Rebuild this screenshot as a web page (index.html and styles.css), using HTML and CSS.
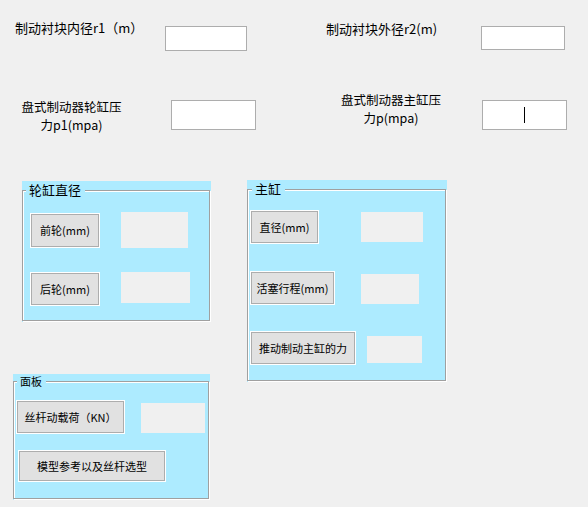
FILE: index.html
```html
<!DOCTYPE html>
<html lang="zh">
<head>
<meta charset="utf-8">
<title>制动器计算</title>
<link rel="stylesheet" href="styles.css">
</head>
<body>
<div class="row row-one">
  <div class="label label-r1">制动衬块内径r1（m）</div>
  <div class="edit edit-r1"></div>
  <div class="label label-r2">制动衬块外径r2(m)</div>
  <div class="edit edit-r2"></div>
</div>
<div class="row row-two">
  <div class="label label-p1">盘式制动器轮缸压<br>力p1(mpa)</div>
  <div class="edit edit-p1"></div>
  <div class="label label-p">盘式制动器主缸压<br>力p(mpa)</div>
  <div class="edit edit-p"><span class="caret"></span></div>
</div>
<div class="bottom">
  <div class="left-col">
    <section class="panel panel-wheel">
      <div class="frame frame-wheel">
        <span class="title">轮缸直径</span>
        <div class="prow wheel-r1">
          <button class="btn btn-front">前轮(mm)</button>
          <div class="out out-front"></div>
        </div>
        <div class="prow wheel-r2">
          <button class="btn btn-rear">后轮(mm)</button>
          <div class="out out-rear"></div>
        </div>
      </div>
    </section>
    <section class="panel panel-board">
      <div class="frame frame-board">
        <span class="title title-small">面板</span>
        <div class="prow board-r1">
          <button class="btn btn-load">丝杆动载荷（KN）</button>
          <div class="out out-load"></div>
        </div>
        <div class="prow board-r2">
          <button class="btn btn-model">模型参考以及丝杆选型</button>
        </div>
      </div>
    </section>
  </div>
  <section class="panel panel-master">
    <div class="frame frame-master">
      <span class="title title-master">主缸</span>
      <div class="prow master-r1">
        <button class="btn btn-dia">直径(mm)</button>
        <div class="out out-dia"></div>
      </div>
      <div class="prow master-r2">
        <button class="btn btn-stroke">活塞行程(mm)</button>
        <div class="out out-stroke"></div>
      </div>
      <div class="prow master-r3">
        <button class="btn btn-force">推动制动主缸的力</button>
        <div class="out out-force"></div>
      </div>
    </div>
  </section>
</div>
</body>
</html>
```

FILE: styles.css
```css
* { box-sizing: border-box; }

html, body {
  margin: 0;
  padding: 0;
}

body {
  width: 588px;
  height: 507px;
  overflow: hidden;
  background: #f0f0f0;
  color: #000;
  font-family: "Noto Sans CJK SC", "Liberation Sans", sans-serif;
  font-size: 13px;
}

.row {
  display: flex;
  align-items: flex-start;
}

.label {
  font-size: 13px;
  line-height: 16px;
  white-space: nowrap;
}

.edit {
  background: #fff;
  border: 1px solid #adadad;
}

/* first row */
.row-one { padding-top: 20px; }
.label-r1 { margin-left: 15px; width: 150px; }
.edit-r1 { margin-top: 6px; width: 82px; height: 25px; }
.label-r2 { margin-left: 79px; width: 155px; padding-top: 1px; }
.edit-r2 { margin-top: 6px; width: 84px; height: 24px; }

/* second row */
.row-two { margin-top: 41px; }
.label-p1,
.label-p {
  text-align: center;
  font-size: 12.5px;
  line-height: 18px;
}
.label-p1 { margin-left: 8px; width: 127px; margin-top: 6px; }
.edit-p1 { margin-left: 36px; margin-top: 8px; width: 85px; height: 30px; }
.label-p { margin-left: 44px; width: 182px; margin-top: -1px; }
.edit-p {
  margin-top: 8px;
  width: 85px;
  height: 30px;
  display: flex;
  align-items: center;
  justify-content: center;
}
.caret {
  display: block;
  width: 1px;
  height: 16px;
  background: #000;
}

/* bottom area */
.bottom {
  margin-top: 46px;
  display: flex;
  align-items: flex-start;
}

.left-col {
  display: flex;
  flex-direction: column;
  align-items: flex-start;
}

.panel {
  background: #adebff;
}

.frame {
  position: relative;
  border: 1px solid #a0a0a0;
  box-shadow: inset 1px 1px 0 #fff, 1px 1px 0 #fff;
}

.title {
  position: absolute;
  top: -8px;
  left: 3px;
  padding: 0 4px 0 3px;
  background: #adebff;
  font-size: 13px;
  line-height: 14px;
  white-space: nowrap;
}
.title-master { left: 4px; }
.title-small {
  top: -7px;
  font-size: 11px;
  line-height: 13px;
}

.prow {
  display: flex;
  align-items: flex-start;
}

.btn {
  display: flex;
  align-items: center;
  justify-content: center;
  padding: 0;
  margin: 0;
  background: #e1e1e1;
  border: 1px solid #adadad;
  box-shadow: 0 0 0 1px #fff;
  font-family: "Noto Sans CJK SC", "Liberation Sans", sans-serif;
  font-size: 11px;
  line-height: 13px;
  color: #000;
  white-space: nowrap;
}

.out {
  background: #f0f0f0;
}

/* wheel cylinder panel */
.panel-wheel {
  margin-left: 22px;
  margin-top: 1px;
  width: 189px;
  height: 141px;
  padding-top: 9px;
}
.frame-wheel {
  width: 188px;
  height: 131px;
  padding-left: 8px;
}
.wheel-r1 { margin-top: 21px; }
.btn-front { margin-top: 2px; width: 68px; height: 33px; }
.out-front { margin-left: 22px; width: 67px; height: 36px; }
.wheel-r2 { margin-top: 24px; }
.btn-rear { margin-top: 1px; width: 68px; height: 32px; }
.out-rear { margin-left: 22px; width: 69px; height: 31px; }

/* board panel */
.panel-board {
  margin-left: 13px;
  margin-top: 52px;
  width: 197px;
  height: 126px;
  padding-top: 7px;
}
.frame-board {
  width: 196px;
  height: 118px;
}
.board-r1 { margin-top: 19px; }
.btn-load { margin-left: 3px; width: 107px; height: 32px; }
.out-load { margin-left: 17px; margin-top: 2px; width: 64px; height: 30px; }
.board-r2 { margin-top: 18px; }
.btn-model { margin-left: 5px; width: 146px; height: 30px; }

/* master cylinder panel */
.panel-master {
  margin-left: 36px;
  width: 200px;
  height: 202px;
  padding-top: 9px;
}
.frame-master {
  width: 199px;
  height: 192px;
  padding-left: 3px;
}
.master-r1 { margin-top: 21px; }
.btn-dia { width: 67px; height: 32px; }
.out-dia { margin-left: 43px; margin-top: 1px; width: 62px; height: 30px; }
.master-r2 { margin-top: 29px; }
.btn-stroke { width: 83px; height: 32px; }
.out-stroke { margin-left: 27px; margin-top: 2px; width: 58px; height: 30px; }
.master-r3 { margin-top: 28px; }
.btn-force { width: 104px; height: 32px; }
.out-force { margin-left: 12px; margin-top: 4px; width: 55px; height: 27px; }
```
